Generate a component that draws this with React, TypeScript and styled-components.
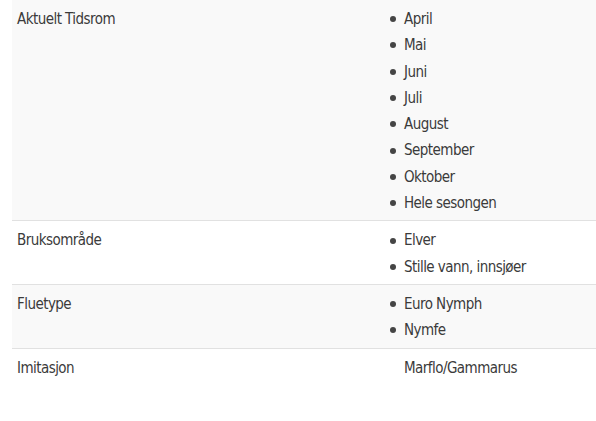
import React from "react";
import styled, { createGlobalStyle } from "styled-components";

const Global = createGlobalStyle`
  html, body { margin: 0; padding: 0; background: #ffffff; }
  body { font-family: "DejaVu Sans Condensed", "Roboto", sans-serif; }
`;

const Table = styled.div`
  margin-left: 12px;
  width: 584px;
  display: grid;
  grid-template-columns: 372px 1fr;
`;

const Row = styled.div<{ $striped: boolean; $last?: boolean }>`
  display: contents;
  & > div {
    background: ${(p) => (p.$striped ? "#f9f9f9" : "#ffffff")};
    border-bottom: ${(p) => (p.$last ? "none" : "1px solid #e1e1e1")};
    padding: 6px 5px 4px 5px;
  }
`;

const Label = styled.div`
  font-size: 15px;
  letter-spacing: -0.55px;
  line-height: 26.3px;
  color: #3b3b3b;
`;

const Value = styled.div``;

const List = styled.ul`
  margin: 0;
  padding: 0;
  list-style: none;
`;

const Item = styled.li<{ $plain?: boolean }>`
  display: flex;
  align-items: center;
  gap: 8px;
  font-size: 15px;
  letter-spacing: -0.55px;
  line-height: 26.3px;
  height: 26.3px;
  color: #3b3b3b;
  &::before {
    content: "";
    flex: none;
    width: 6px;
    height: 6px;
    margin-left: 1px;
    border-radius: 50%;
    background: ${(p) => (p.$plain ? "transparent" : "#454545")};
  }
`;

const rows: { label: string; items: string[]; plain?: boolean }[] = [
  {
    label: "Aktuelt Tidsrom",
    items: ["April", "Mai", "Juni", "Juli", "August", "September", "Oktober", "Hele sesongen"],
  },
  { label: "Bruksområde", items: ["Elver", "Stille vann, innsjøer"] },
  { label: "Fluetype", items: ["Euro Nymph", "Nymfe"] },
  { label: "Imitasjon", items: ["Marflo/Gammarus"], plain: true },
];

export default function App() {
  return (
    <>
      <Global />
      <Table>
        {rows.map((r, i) => (
          <Row key={r.label} $striped={i % 2 === 0} $last={i === rows.length - 1}>
            <Label>{r.label}</Label>
            <Value>
              <List>
                {r.items.map((it) => (
                  <Item key={it} $plain={r.plain}>{it}</Item>
                ))}
              </List>
            </Value>
          </Row>
        ))}
      </Table>
    </>
  );
}
